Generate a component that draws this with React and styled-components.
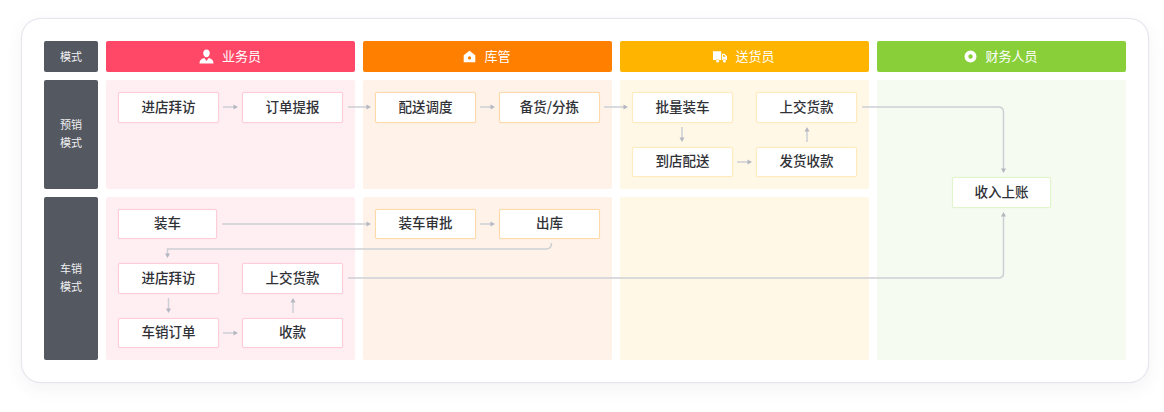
import React from "react";
import styled, { createGlobalStyle } from "styled-components";

const GlobalStyle = createGlobalStyle`
  html, body {
    margin: 0;
    padding: 0;
    background: #ffffff;
  }
  body {
    font-family: "Noto Sans CJK SC", "Liberation Sans", sans-serif;
  }
`;

const Colors = {
  pink: { head: "#ff4867", tint: "#ffeff2", line: "#ffccd7" },
  orange: { head: "#ff8000", tint: "#fef2e9", line: "#ffd9a8" },
  yellow: { head: "#ffb400", tint: "#fff8e6", line: "#ffebbd" },
  green: { head: "#88cf3a", tint: "#f5fbf0", line: "#e0f5ca" },
};

const PersonIcon = () => (
  <svg width="15" height="15" viewBox="0 0 15 15" fill="#fff">
    <path d="M7.5 0.4c2 0 3.3 1.5 3.3 3.6 0 2.2-1.4 4.3-3.3 4.3S4.2 6.200 4.200 4c0-2.100 1.300-3.600 3.300-3.600z" />
    <path d="M0.500 14.400c0-3 1.300-4.600 4.800-5.500l2.200 3 2.200-3c3.500.900 4.800 2.500 4.800 5.500z" />
  </svg>
);

const HomeIcon = () => (
  <svg width="13" height="13" viewBox="0 0 13 13" fill="#fff">
    <path
      fillRule="evenodd"
      d="M6.500 0.800L12.300 5.200V12.200H0.700V5.200zM6.500 6.200a1.700 1.700 0 1 0 0 3.400 1.700 1.700 0 0 0 0-3.400z"
    />
  </svg>
);

const TruckIcon = () => (
  <svg width="14" height="12" viewBox="0 0 14 12" fill="#fff">
    <path d="M0 0.300h8.200v8.700H6.300a2 2 0 0 0-3.300 0H0z" />
    <path
      fillRule="evenodd"
      d="M9 2.800h2.600L14 5.600V9h-.9a2 2 0 0 0-3.300 0H9zM10 3.900v1.900h2.500l-1.400-1.900z"
    />
    <circle cx="4.650" cy="10" r="1.500" />
    <circle cx="11.450" cy="10" r="1.500" />
  </svg>
);

const CoinIcon = () => (
  <svg width="13" height="13" viewBox="0 0 13 13" fill="#fff">
    <path
      fillRule="evenodd"
      d="M6.500 0.500a6 6 0 1 1 0 12 6 6 0 0 1 0-12zM6.500 4.300a2.200 2.200 0 1 0 0 4.400 2.200 2.200 0 0 0 0-4.400z"
    />
  </svg>
);

const roles = [
  { name: "业务员", color: Colors.pink, icon: <PersonIcon /> },
  { name: "库管", color: Colors.orange, icon: <HomeIcon /> },
  { name: "送货员", color: Colors.yellow, icon: <TruckIcon /> },
  { name: "财务人员", color: Colors.green, icon: <CoinIcon /> },
];

// straight runs and elbows between the boxes, in page coordinates
const lines = [
  "M223 107H234",
  "M348 107H367",
  "M480 107H491",
  "M604 107H624",
  "M682 127V138",
  "M737 162H748",
  "M807 142V131",
  "M862 107H998Q1003.500 107 1003.500 112V169",
  "M222 224H367",
  "M480 224H491",
  "M551.500 243Q551.500 249 546 249H167.500V254",
  "M168.500 298V309",
  "M223 333H234",
  "M293 313V302",
  "M348 278H998Q1003.500 278 1003.500 273V216",
];

const heads = [
  "238,107 233.500,104.500 233.500,109.500",
  "371,107 366.500,104.500 366.500,109.500",
  "495,107 490.500,104.500 490.500,109.500",
  "628,107 623.500,104.500 623.500,109.500",
  "682,142 679.500,137.500 684.500,137.500",
  "752,162 747.500,159.500 747.500,164.500",
  "807,127 804.500,131.500 809.500,131.500",
  "1003.500,173 1001,168.500 1006,168.500",
  "371,224 366.500,221.500 366.500,226.500",
  "495,224 490.500,221.500 490.500,226.500",
  "167.500,258 165,253.500 170,253.500",
  "168.500,313 166,308.500 171,308.500",
  "238,333 233.500,330.500 233.500,335.500",
  "293,298 290.500,302.500 295.500,302.500",
  "1003.500,212 1001,216.500 1006,216.500",
];

const App = () => {
  return (
    <Page>
      <GlobalStyle />
      <Card>
        <Board>
          <ModeHead>模式</ModeHead>
          {roles.map((role) => (
            <RoleHead key={role.name} $color={role.color.head}>
              {role.icon}
              <RoleName>{role.name}</RoleName>
            </RoleHead>
          ))}

          <ModeCell>
            预销
            <br />
            模式
          </ModeCell>
          <Lane $tint={Colors.pink.tint}>
            <Step $line={Colors.pink.line}>进店拜访</Step>
            <Step $line={Colors.pink.line}>订单提报</Step>
          </Lane>
          <Lane $tint={Colors.orange.tint}>
            <Step $line={Colors.orange.line}>配送调度</Step>
            <Step $line={Colors.orange.line}>备货/分拣</Step>
          </Lane>
          <Lane $tint={Colors.yellow.tint}>
            <Step $line={Colors.yellow.line}>批量装车</Step>
            <Step $line={Colors.yellow.line}>上交货款</Step>
            <Step $line={Colors.yellow.line}>到店配送</Step>
            <Step $line={Colors.yellow.line}>发货收款</Step>
          </Lane>
          <FinanceLane>
            <IncomeStep>收入上账</IncomeStep>
          </FinanceLane>

          <ModeCell>
            车销
            <br />
            模式
          </ModeCell>
          <Lane $tint={Colors.pink.tint} $tight>
            <Step $line={Colors.pink.line} $short>
              装车
            </Step>
            <Spacer />
            <Step $line={Colors.pink.line}>进店拜访</Step>
            <Step $line={Colors.pink.line}>上交货款</Step>
            <Step $line={Colors.pink.line}>车销订单</Step>
            <Step $line={Colors.pink.line}>收款</Step>
          </Lane>
          <Lane $tint={Colors.orange.tint} $tight>
            <Step $line={Colors.orange.line}>装车审批</Step>
            <Step $line={Colors.orange.line}>出库</Step>
          </Lane>
          <Lane $tint={Colors.yellow.tint} $tight />
        </Board>
      </Card>
      <Connectors viewBox="0 0 1164 412">
        {lines.map((d) => (
          <path key={d} d={d} fill="none" stroke="#cdcfd5" strokeWidth="1.5" />
        ))}
        {heads.map((points) => (
          <polygon key={points} points={points} fill="#b4b7c1" />
        ))}
      </Connectors>
    </Page>
  );
};

const Page = styled.div`
  position: relative;
  width: 1164px;
  height: 412px;
  padding: 18px 15px 29px 21px;
  box-sizing: border-box;
  overflow: hidden;
`;
const Card = styled.div`
  box-sizing: border-box;
  width: 1128px;
  height: 365px;
  padding: 22px;
  background: #ffffff;
  border: 1px solid #e6e6ee;
  border-radius: 20px;
  box-shadow: 0 0 1px #e6e6ee, 0 6px 18px rgba(60, 60, 90, 0.06);
`;
const Board = styled.div`
  display: grid;
  grid-template-columns: 54px repeat(4, 249px);
  grid-template-rows: 31px 109px 163px;
  gap: 8px;
`;
const ModeHead = styled.div`
  display: flex;
  align-items: center;
  justify-content: center;
  padding-bottom: 2px;
  box-sizing: border-box;
  background: #545861;
  border-radius: 2px;
  color: #f1f1f3;
  font-size: 11px;
`;
const ModeCell = styled(ModeHead)`
  padding-bottom: 3px;
  line-height: 18px;
  text-align: center;
`;
const RoleHead = styled.div`
  display: flex;
  align-items: center;
  justify-content: center;
  gap: 8px;
  padding-right: 1px;
  background: ${(p) => p.$color};
  border-radius: 2px;
  color: #ffffff;
  font-size: 13px;
`;
const RoleName = styled.span`
  position: relative;
  top: -1px;
`;
const Lane = styled.div`
  display: grid;
  grid-template-columns: 101px 101px;
  grid-auto-rows: 30.500px;
  column-gap: 23px;
  row-gap: 24px;
  align-content: start;
  padding: ${(p) => (p.$tight ? "11.500px" : "12px")} 12px 12px;
  background: ${(p) => p.$tint};
  border-radius: 2px;
`;
const FinanceLane = styled.div`
  grid-column: 5;
  grid-row: 2 / span 2;
  display: flex;
  justify-content: center;
  align-items: flex-start;
  padding-top: 97px;
  background: ${Colors.green.tint};
`;
const Step = styled.div`
  display: flex;
  align-items: center;
  justify-content: center;
  box-sizing: border-box;
  width: ${(p) => (p.$short ? "99px" : "101px")};
  height: 30.500px;
  padding-bottom: 3px;
  background: #ffffff;
  border: 1px solid ${(p) => p.$line};
  box-shadow: 0 0 1px ${(p) => p.$line};
  border-radius: 2px;
  color: #2f3137;
  font-size: 13.500px;
  font-weight: 500;
`;
const IncomeStep = styled(Step)`
  width: 99px;
  border-color: ${Colors.green.line};
  box-shadow: 0 0 1px ${Colors.green.line};
`;
const Spacer = styled.div``;
const Connectors = styled.svg`
  position: absolute;
  left: 0;
  top: 0;
  width: 1164px;
  height: 412px;
  pointer-events: none;
`;

export default App;
